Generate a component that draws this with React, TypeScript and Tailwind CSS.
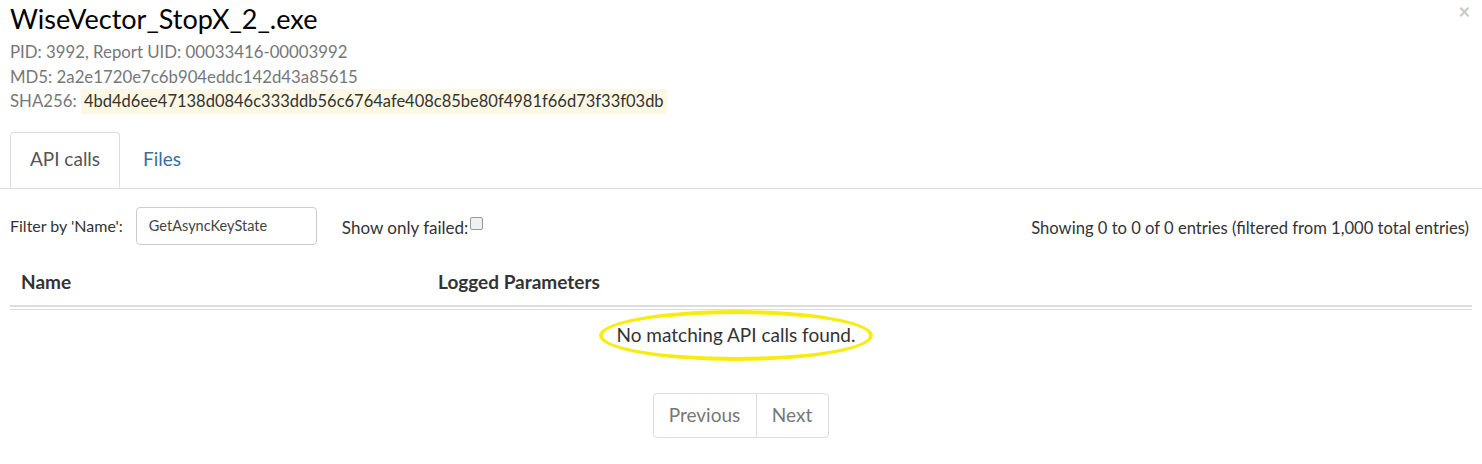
import React from "react";

export default function App(): React.ReactNode {
  return (
    <div className="relative w-[1482px] h-[464px] bg-white text-[#333] font-['Lato','Open_Sans',sans-serif]">
      <button className="absolute right-[12px] top-[1px] text-[20px] font-bold leading-none text-[#c8c8c8]">
        ×
      </button>

      <header className="pl-[10px] pt-[2px]">
        <h4 className="text-[27px] leading-[33px] text-black">WiseVector_StopX_2_.exe</h4>
        <div className="mt-[5px] text-[16.8px] leading-[24.5px] text-[#777]">
          <div>PID: 3992, Report UID: 00033416-00003992</div>
          <div>MD5: 2a2e1720e7c6b904eddc142d43a85615</div>
          <div className="flex items-center">
            <span>SHA256:&nbsp;</span>
            <span className="bg-[#fcf8e3] px-[3px] text-[16.5px] text-[#333]">
              4bd4d6ee47138d0846c333ddb56c6764afe408c85be80f4981f66d73f33f03db
            </span>
          </div>
        </div>
      </header>

      <nav className="mt-[18px] flex border-b border-[#ddd] pl-[10px] text-[19px]">
        <div className="-mb-px h-[56px] w-[110px] rounded-t-[4px] border border-b-white border-[#ddd] bg-white flex items-center justify-center text-[#555]">
          API calls
        </div>
        <div className="h-[56px] px-[23px] flex items-center text-[#3a6e9f]">Files</div>
      </nav>

      <section className="mt-[18px] flex items-center justify-between pl-[10px] pr-[13px] text-[16.6px]">
        <div className="flex items-center">
          <span className="text-[16px]">Filter by 'Name':</span>
          <div className="ml-[13px] h-[38px] w-[181px] rounded-[4px] border border-[#ccc] flex items-center px-[12px] text-[14.5px] text-[#444]">
            GetAsyncKeyState
          </div>
          <span className="ml-[25px] mt-[4px] text-[17px]">Show only failed:</span>
          <span className="ml-[2px] -mt-[4px] h-[13px] w-[13px] rounded-[2px] border border-[#999] bg-[#f0f0f0]" />
        </div>
        <div className="mt-[6px]">Showing 0 to 0 of 0 entries (filtered from 1,000 total entries)</div>
      </section>

      <div className="mt-[23px] ml-[10px] mr-[10px]">
        <div className="grid grid-cols-[428px_1fr] border-b-2 border-[#ddd] pb-[9px] text-[19px] font-bold">
          <div className="pl-[11px]">Name</div>
          <div>Logged Parameters</div>
        </div>
        <div className="mt-[2px] border-t border-[#ddd] flex justify-center">
          <div className="ml-[-10px] flex h-[51px] w-[274px] items-center justify-center rounded-[50%] border-[4px] border-[#f7ec0f] text-[19px]">
            No matching API calls found.
          </div>
        </div>
      </div>

      <div className="mt-[32px] flex justify-center">
        <div className="ml-[-1px] flex h-[45px] overflow-hidden rounded-[4px] border border-[#ddd] text-[19px] text-[#777]">
          <div className="flex w-[103px] items-center justify-center border-r border-[#ddd]">Previous</div>
          <div className="flex w-[71px] items-center justify-center">Next</div>
        </div>
      </div>
    </div>
  );
}
